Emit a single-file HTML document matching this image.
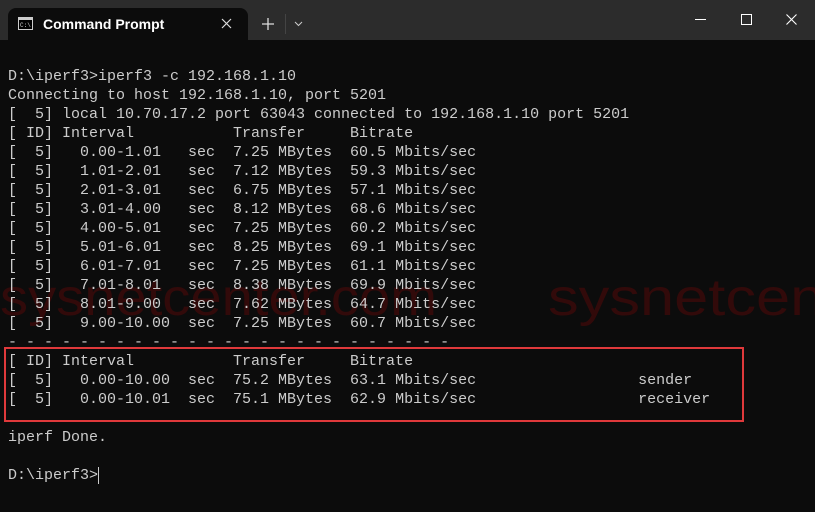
<!DOCTYPE html><html><head><style>
body{margin:0;width:815px;height:512px;background:#0c0c0c;overflow:hidden;position:relative;font-family:"Liberation Sans",sans-serif}
#tb{position:absolute;left:0;top:0;width:815px;height:40px;background:#2c2c2c}
#tab{position:absolute;left:8px;top:8px;width:240px;height:32px;background:#0c0c0c;border-radius:8px 8px 0 0}
.t{position:absolute;color:#fff}
pre{position:absolute;left:8px;top:67px;margin:0;font:15px/19px "Liberation Mono",monospace;color:#cccccc;letter-spacing:0}
.wm{position:absolute;font:52px/52px "Liberation Sans",sans-serif;color:#320a0a;top:272px;white-space:nowrap}
</style></head><body>
<div id="tb"><div id="tab"></div></div>
<svg style="position:absolute;left:18px;top:17px" width="15" height="13"><rect x="0.5" y="0.5" width="14" height="12" fill="#000" stroke="#ccc"/><rect x="1" y="1" width="13" height="2" fill="#ccc"/><text x="2" y="10" font-size="6" fill="#ccc" font-family="Liberation Mono">C:\</text></svg>
<div class="t" style="left:43px;top:16px;font-size:14px;font-weight:bold">Command Prompt</div>
<svg style="position:absolute;left:221px;top:18px" width="11" height="11"><path d="M1 1L10 10M10 1L1 10" stroke="#ddd" stroke-width="1.2"/></svg>
<svg style="position:absolute;left:261px;top:17px" width="14" height="14"><path d="M7 1V13M1 7H13" stroke="#ddd" stroke-width="1.3"/></svg>
<div style="position:absolute;left:285px;top:14px;width:1px;height:20px;background:#444"></div>
<svg style="position:absolute;left:294px;top:21px" width="9" height="6"><path d="M1 1L4.5 4.5L8 1" stroke="#ccc" fill="none"/></svg>
<div style="position:absolute;left:695px;top:19px;width:11px;height:1px;background:#fff"></div>
<div style="position:absolute;left:741px;top:14px;width:9px;height:9px;border:1px solid #fff"></div>
<svg style="position:absolute;left:786px;top:14px" width="11" height="11"><path d="M0.5 0.5L10.5 10.5M10.5 0.5L0.5 10.5" stroke="#fff" stroke-width="1.1"/></svg>
<div class="wm" style="left:0;transform:scaleX(1.08);transform-origin:0 0">sysnetcenter.com</div>
<div class="wm" style="left:548px;transform:scaleX(1.18);transform-origin:0 0">sysnetcen</div>
<div style="position:absolute;left:4px;top:347px;width:736px;height:71px;border:2px solid #e0393b"></div>
<pre>D:\iperf3&gt;iperf3 -c 192.168.1.10
Connecting to host 192.168.1.10, port 5201
[  5] local 10.70.17.2 port 63043 connected to 192.168.1.10 port 5201
[ ID] Interval           Transfer     Bitrate
[  5]   0.00-1.01   sec  7.25 MBytes  60.5 Mbits/sec
[  5]   1.01-2.01   sec  7.12 MBytes  59.3 Mbits/sec
[  5]   2.01-3.01   sec  6.75 MBytes  57.1 Mbits/sec
[  5]   3.01-4.00   sec  8.12 MBytes  68.6 Mbits/sec
[  5]   4.00-5.01   sec  7.25 MBytes  60.2 Mbits/sec
[  5]   5.01-6.01   sec  8.25 MBytes  69.1 Mbits/sec
[  5]   6.01-7.01   sec  7.25 MBytes  61.1 Mbits/sec
[  5]   7.01-8.01   sec  8.38 MBytes  69.9 Mbits/sec
[  5]   8.01-9.00   sec  7.62 MBytes  64.7 Mbits/sec
[  5]   9.00-10.00  sec  7.25 MBytes  60.7 Mbits/sec
- - - - - - - - - - - - - - - - - - - - - - - - -
[ ID] Interval           Transfer     Bitrate
[  5]   0.00-10.00  sec  75.2 MBytes  63.1 Mbits/sec                  sender
[  5]   0.00-10.01  sec  75.1 MBytes  62.9 Mbits/sec                  receiver

iperf Done.

D:\iperf3&gt;</pre>
<div style="position:absolute;left:98px;top:467px;width:1px;height:17px;background:#ccc"></div>
</body></html>
